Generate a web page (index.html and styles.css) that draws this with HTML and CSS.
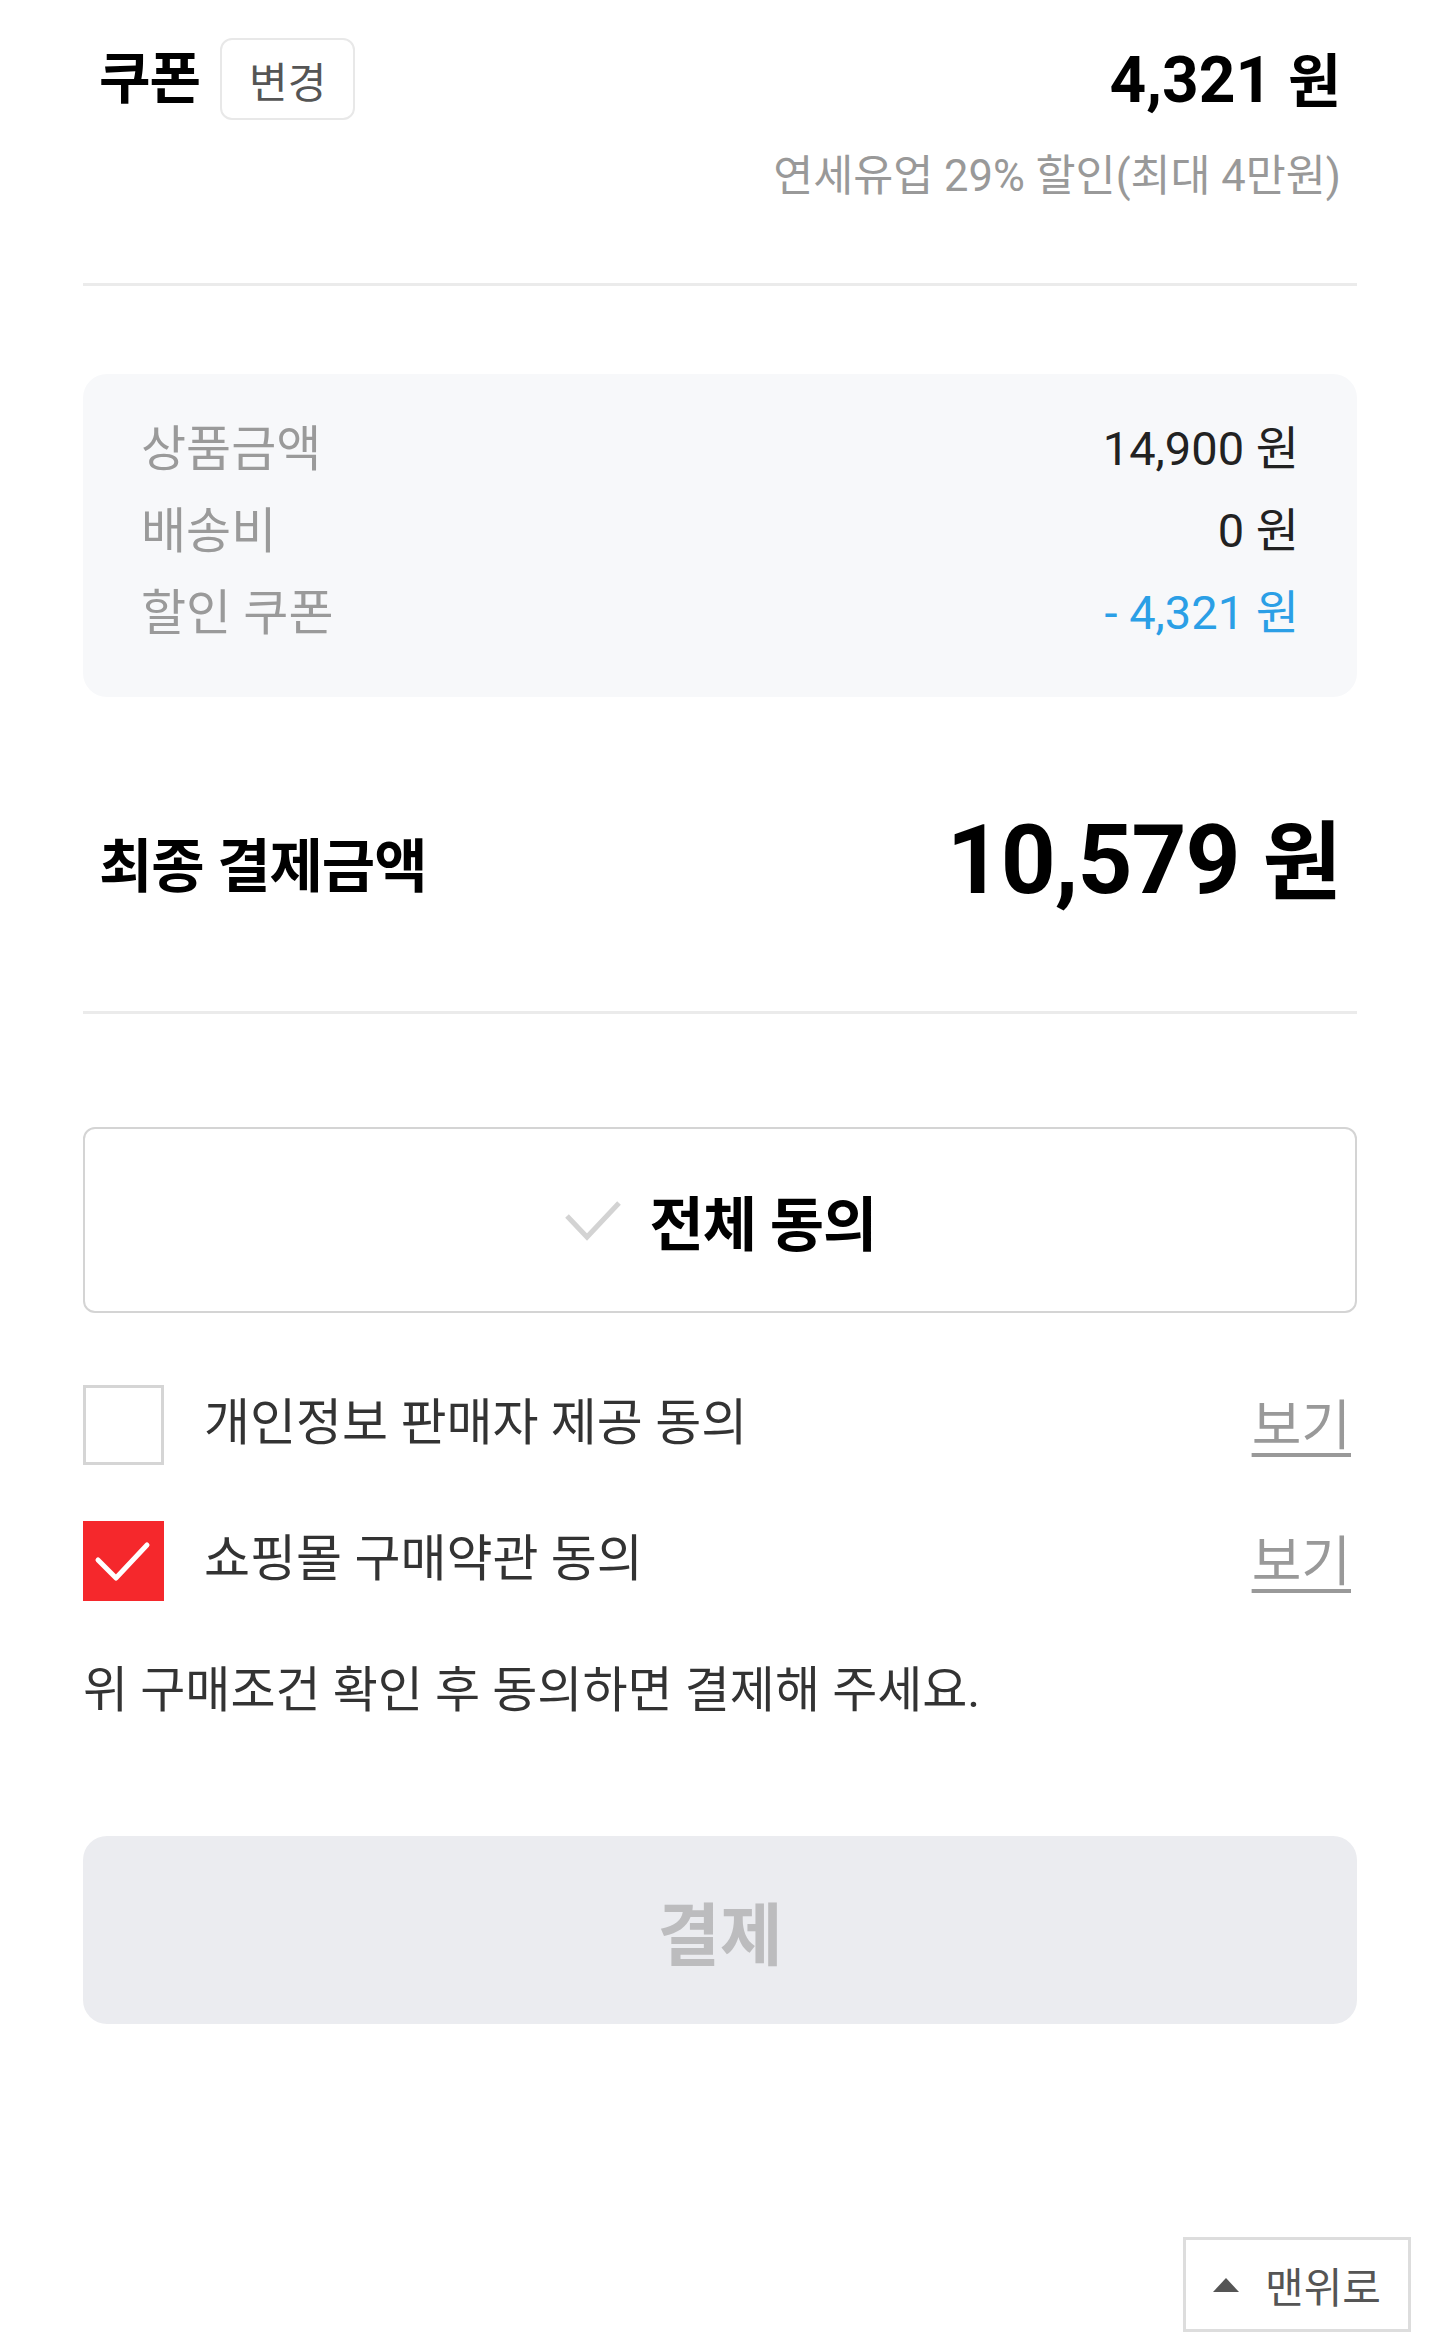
FILE: index.html
```html
<!DOCTYPE html>
<html lang="ko">
<head>
    <meta charset="UTF-8" />
    <meta name="viewport" content="width=device-width, initial-scale=1.0" />
    <title>주문 결제</title>
    <link rel="stylesheet" href="styles.css">
</head>
<body>
    <div class="page">
        <!-- 쿠폰 -->
        <section class="coupon">
            <div class="coupon-row">
                <div class="coupon-title">
                    <h2>쿠폰</h2>
                    <button class="btn-change" type="button">변경</button>
                </div>
                <div class="coupon-amount">4,321 <span class="won">원</span></div>
            </div>
            <p class="coupon-desc">연세유업 29% 할인(최대 4만원)</p>
        </section>

        <!-- 금액 요약 -->
        <section class="summary">
            <div class="summary-row">
                <span class="summary-label">상품금액</span>
                <span class="summary-value">14,900 원</span>
            </div>
            <div class="summary-row">
                <span class="summary-label">배송비</span>
                <span class="summary-value">0 원</span>
            </div>
            <div class="summary-row">
                <span class="summary-label">할인 쿠폰</span>
                <span class="summary-value discount">- 4,321 원</span>
            </div>
        </section>

        <!-- 최종 결제금액 -->
        <section class="total">
            <h2>최종 결제금액</h2>
            <div class="total-amount">10,579 <span class="won">원</span></div>
        </section>

        <!-- 약관 동의 -->
        <section class="agree">
            <button class="agree-all" type="button">
                <svg class="agree-all-check" width="58" height="42" viewBox="0 0 58 42">
                    <path d="M3 17 L23 38 L55 4" fill="none" stroke="#d3d3d3" stroke-width="5" />
                </svg>
                <span>전체 동의</span>
            </button>

            <ul class="agree-list">
                <li class="agree-item">
                    <span class="checkbox"></span>
                    <span class="agree-label">개인정보 판매자 제공 동의</span>
                    <a class="agree-link" href="#">보기</a>
                </li>
                <li class="agree-item">
                    <span class="checkbox checked">
                        <svg width="80" height="80" viewBox="0 0 80 80">
                            <path d="M15 39 L33 57 L64 24" fill="none" stroke="#fff" stroke-width="5" stroke-linecap="round" stroke-linejoin="round" />
                        </svg>
                    </span>
                    <span class="agree-label">쇼핑몰 구매약관 동의</span>
                    <a class="agree-link" href="#">보기</a>
                </li>
            </ul>

            <p class="agree-notice">위 구매조건 확인 후 동의하면 결제해 주세요.</p>

            <button class="btn-pay" type="button" disabled>결제</button>
        </section>
    </div>

    <a class="btn-top" href="#">
        <span class="btn-top-arrow"></span>
        맨위로
    </a>
</body>
</html>
```

FILE: styles.css
```css
/* 기본 */
body {
    margin: 0;
    background-color: #fff;
    color: #222;
    font-family: Roboto, "Noto Sans CJK KR", sans-serif;
}

h2, p {
    margin: 0;
}

button {
    font-family: inherit;
    background: none;
    cursor: pointer;
}

.page {
    padding: 0 83px;
}

/* 쿠폰 */
.coupon {
    padding: 39px 16px 76px;
    border-bottom: 3px solid #ebebeb;
}

.coupon-row {
    display: flex;
    justify-content: space-between;
    align-items: center;
    height: 80px;
}

.coupon-title {
    display: flex;
    align-items: center;
}

.coupon-title h2 {
    font-size: 56px;
    font-weight: 700;
    color: #000;
    line-height: 80px;
    letter-spacing: -1px;
}

.btn-change {
    margin-left: 20px;
    height: 82px;
    padding: 0 27px;
    border: 2px solid #e8e8e8;
    border-radius: 12px;
    font-size: 42px;
    color: #555;
}

.coupon-amount {
    font-size: 64px;
    font-weight: 700;
    color: #000;
    line-height: 80px;
    margin-top: 6px;
}

.coupon-amount .won {
    font-size: 0.9em;
}

.coupon-desc {
    margin-top: 28px;
    text-align: right;
    font-size: 43.5px;
    line-height: 60px;
    color: #999;
}

/* 금액 요약 */
.summary {
    margin-top: 88px;
    padding: 29px 58px 48px;
    background-color: #f7f8fa;
    border-radius: 24px;
}

.summary-row {
    display: flex;
    justify-content: space-between;
    align-items: center;
    height: 82px;
}

.summary-label {
    font-size: 49px;
    color: #9a9a9a;
}

.summary-value {
    font-size: 47px;
    color: #222;
}

.summary-value.discount {
    color: #2b9fe6;
}

/* 최종 결제금액 */
.total {
    display: flex;
    justify-content: space-between;
    align-items: center;
    height: 120px;
    padding: 105px 16px 89px;
    border-bottom: 3px solid #ebebeb;
}

.total h2 {
    font-size: 58px;
    font-weight: 700;
    color: #000;
    letter-spacing: -1px;
}

.total-amount {
    font-size: 96px;
    font-weight: 700;
    color: #000;
    line-height: 120px;
    letter-spacing: -1px;
}

.total-amount .won {
    font-size: 0.9em;
}

/* 약관 동의 */
.agree {
    padding-top: 113px;
}

.agree-all {
    display: flex;
    justify-content: center;
    align-items: center;
    gap: 28px;
    width: 100%;
    height: 186px;
    border: 2px solid #d4d4d4;
    border-radius: 12px;
    font-size: 59px;
    font-weight: 700;
    color: #000;
    letter-spacing: -1px;
}

.agree-list {
    list-style: none;
    margin: 72px 0 0;
    padding: 0;
    display: flex;
    flex-direction: column;
    gap: 56px;
}

.agree-item {
    display: flex;
    align-items: center;
    height: 80px;
}

.checkbox {
    box-sizing: border-box;
    flex-shrink: 0;
    width: 81px;
    height: 80px;
    border: 3px solid #d5d5d5;
    background-color: #fff;
}

.checkbox.checked {
    border: none;
    background-color: #f5282c;
}

.checkbox svg {
    display: block;
}

.agree-label {
    flex: 1;
    margin-left: 40px;
    padding-bottom: 14px;
    font-size: 50px;
    color: #333;
}

.agree-link {
    margin-right: 6px;
    padding-bottom: 8px;
    font-size: 54px;
    color: #999;
    text-decoration: underline;
    text-decoration-thickness: 4px;
    text-underline-offset: 8px;
}

.agree-notice {
    margin-top: 58px;
    font-size: 49px;
    line-height: 64px;
    color: #333;
}

.btn-pay {
    display: block;
    width: 100%;
    height: 188px;
    margin-top: 113px;
    border: none;
    border-radius: 24px;
    background-color: #ebecf0;
    font-size: 68px;
    font-weight: 700;
    color: #bcbcbe;
    cursor: default;
}

/* 맨위로 */
.btn-top {
    position: absolute;
    top: 2237px;
    right: 29px;
    box-sizing: border-box;
    width: 228px;
    height: 95px;
    display: flex;
    align-items: center;
    justify-content: center;
    gap: 26px;
    border: 3px solid #ddd;
    background-color: #fff;
    font-size: 42px;
    color: #555;
    text-decoration: none;
}

.btn-top-arrow {
    width: 0;
    height: 0;
    border-left: 13px solid transparent;
    border-right: 13px solid transparent;
    border-bottom: 14px solid #555;
}
```
